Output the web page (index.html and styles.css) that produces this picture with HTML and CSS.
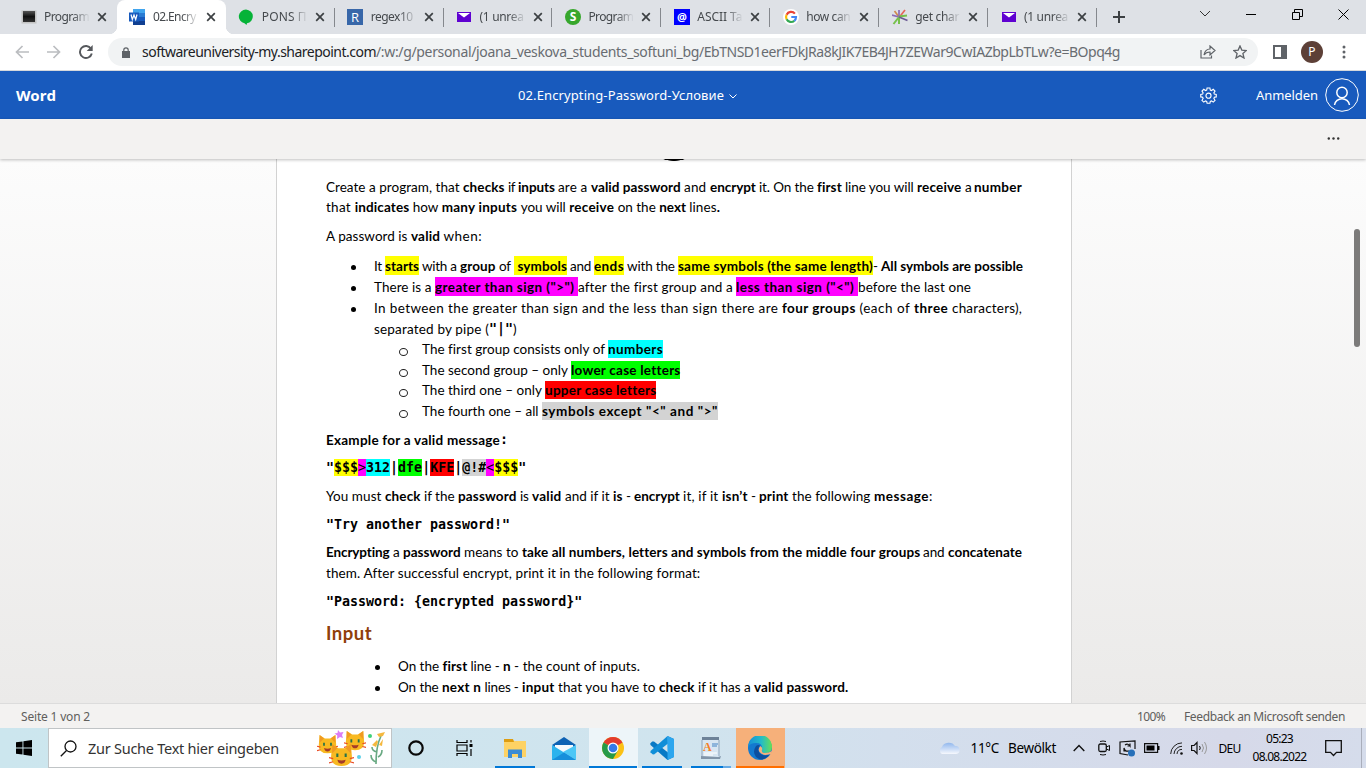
FILE: index.html
```html
<!DOCTYPE html>
<html lang="de">
<head>
<meta charset="utf-8">
<title>02.Encrypting-Password-Условие</title>
<link rel="stylesheet" href="styles.css">
</head>
<body>
<svg class="defs" width="0" height="0">
  <symbol id="x" viewBox="0 0 10 10"><path d="M1.2 1.2l7.6 7.6M8.8 1.2L1.2 8.8" stroke="#3c4043" stroke-width="1.7" fill="none"/></symbol>
  <symbol id="mail" viewBox="0 0 16 16"><path d="M1 3h14v10H1z" fill="#5f01d1"/><path d="M2 4h12L8 8.5z" fill="#fff"/></symbol>
  <symbol id="cat" viewBox="0 0 24 24"><path d="M3 1l6 4h6l6-4 1 12q0 9-10 9T2 13z" fill="#f8b921"/><path d="M3 1l5 4-5 5zM21 1l-5 4 5 5z" fill="#f09a22"/><path d="M8 10v3.500M16 10v3.500" stroke="#267349" stroke-width="2"/><path d="M8 16q4 1.500 8 0-1 4-4 4t-4-4z" fill="#a43b28"/><path d="M0 14l4 1M0 19l4-1M24 14l-4 1M24 19l-4-1" stroke="#e94c24" stroke-width="1.200"/></symbol>
</svg>

<header class="tabs">
  <div class="tab"><svg class="fav" viewBox="0 0 16 16"><defs><linearGradient id="k" x2="0" y2="1"><stop stop-color="#555"/><stop offset=".5" stop-color="#111"/><stop offset="1" stop-color="#333"/></linearGradient></defs><path d="M.5 1.5h15v13H.5z" fill="#c3c3c3"/><path d="M2 2h12v11H2z" fill="url(#k)"/></svg><span class="tt"><span data-w="45">Program</span></span><svg class="x"><use href="#x"/></svg></div>
  <div class="tab active"><svg class="fav" viewBox="0 0 16 16"><path d="M4 0h12v4H4z" fill="#41a5ee"/><path d="M4 4h12v4H4z" fill="#2b7cd3"/><path d="M4 8h12v4H4z" fill="#185abd"/><path d="M4 12h12v4H4z" fill="#103f91"/><path d="M0 3.5h10v9H0z" fill="#185abd"/><path d="M2 5.5l1.3 5L5 6l1.7 4.500 1.300-5" stroke="#fff" stroke-width="1.2" fill="none"/></svg><span class="tt"><span data-w="43">02.Encry</span></span><svg class="x"><use href="#x"/></svg></div>
  <div class="tab plain"><svg class="fav" viewBox="0 0 16 16"><path d="M8 .5a7.500 7 0 0 1 1 13.800L8.500 16l-2-1.700A7.500 7 0 0 1 8 .5z" fill="#06b338"/></svg><span class="tt"><span data-w="45">PONS П</span></span><svg class="x"><use href="#x"/></svg></div>
  <div class="tab"><svg class="fav" viewBox="0 0 16 16"><path d="M0 0h16v16H0z" fill="#3867a9"/><text x="8" y="12.500" text-anchor="middle" class="fr">R</text></svg><span class="tt"><span data-w="42">regex10</span></span><svg class="x"><use href="#x"/></svg></div>
  <div class="tab"><svg class="fav"><use href="#mail"/></svg><span class="tt"><span data-w="44">(1 unrea</span></span><svg class="x"><use href="#x"/></svg></div>
  <div class="tab"><svg class="fav" viewBox="0 0 16 16"><circle cx="8" cy="8" r="8" fill="#37a72c"/><text x="8" y="12.300" text-anchor="middle" class="fs">S</text></svg><span class="tt"><span data-w="45">Program</span></span><svg class="x"><use href="#x"/></svg></div>
  <div class="tab"><svg class="fav" viewBox="0 0 16 16"><path d="M0 0h16v16H0z" fill="#00f"/><text x="8" y="11.500" text-anchor="middle" class="fa">@</text></svg><span class="tt"><span data-w="45">ASCII Ta</span></span><svg class="x"><use href="#x"/></svg></div>
  <div class="tab"><svg class="fav" viewBox="0 0 16 16"><circle cx="8" cy="8" r="8" fill="#fff"/><g fill="none" stroke-width="2.200"><path d="M11.900 4.600A5 5 0 0 0 3.600 5.700" stroke="#ea4335"/><path d="M3.600 5.700a5 5 0 0 0 0 4.600" stroke="#fbbc05"/><path d="M3.600 10.300a5 5 0 0 0 7.700 1.500" stroke="#34a853"/><path d="M11.300 11.800A5 5 0 0 0 13 8H8.300" stroke="#4285f4"/></g></svg><span class="tt"><span data-w="44">how can</span></span><svg class="x"><use href="#x"/></svg></div>
  <div class="tab"><svg class="fav" viewBox="0 0 16 16" fill="none" stroke-width="1.700"><path d="M7 8L2.500 2" stroke="#d08a4d"/><path d="M7 7.500V1" stroke="#8b6bb5"/><path d="M7.500 8L13 1" stroke="#e5655a"/><path d="M7 8L0 6" stroke="#8b6bb5"/><path d="M7 8l-5.500 7M7 7.500L15 6.500M7 8v7" stroke="#76c14b" stroke-width="2"/><path d="M7 8l8.500 3.500" stroke="#6b5a94"/></svg><span class="tt"><span data-w="44">get char</span></span><svg class="x"><use href="#x"/></svg></div>
  <div class="tab"><svg class="fav"><use href="#mail"/></svg><span class="tt"><span data-w="44">(1 unrea</span></span><svg class="x"><use href="#x"/></svg></div>
  <svg class="plus" viewBox="0 0 12 12"><path d="M6 0v12M0 6h12" stroke="#3c4043" stroke-width="2"/></svg>
  <div class="winbtns">
    <svg width="12" height="8" viewBox="0 0 12 8"><path d="M1 1l5 5 5-5" fill="none" stroke="#333"/></svg>
    <svg width="10" height="10" viewBox="0 0 10 10"><path d="M0 5.500h10" stroke="#000"/></svg>
    <svg width="11" height="11" viewBox="0 0 11 11" fill="none" stroke="#000"><path d="M.5 3.500h7v7h-7zM2.500 3.500v-3h8v7h-3"/></svg>
    <svg width="11" height="11" viewBox="0 0 11 11"><path d="M.5.5l10 10M10.500.5l-10 10" stroke="#000"/></svg>
  </div>
</header>

<nav class="toolbar">
  <svg class="nav1" viewBox="0 0 14 14" fill="none" stroke="#bbbdc0" stroke-width="1.700"><path d="M14 7H1.500M7.500 1l-6 6 6 6"/></svg>
  <svg class="nav2" viewBox="0 0 14 14" fill="none" stroke="#bbbdc0" stroke-width="1.700"><path d="M0 7h12.500M6.500 1l6 6-6 6"/></svg>
  <svg class="nav3" viewBox="0 0 14 14"><path d="M12 3.700A6 6 0 1 0 12.800 8.500" fill="none" stroke="#55585c" stroke-width="1.900"/><path d="M13.700 0v6H7.700z" fill="#55585c"/></svg>
  <div class="pill">
    <svg class="lock" viewBox="0 0 8 11"><path d="M0 4h8v7H0z" fill="#5f6368"/><path d="M1.800 4.500V3a2.200 2.200 0 0 1 4.400 0v1.500" fill="none" stroke="#5f6368" stroke-width="1.200"/></svg>
    <span class="url"><span class="host" data-w="234">softwareuniversity-my.sharepoint.com</span><span data-w="323">/:w:/g/personal/joana_veskova_students_softuni_bg</span><span data-w="421">/EbTNSD1eerFDkJRa8kJIK7EB4JH7ZEWar9CwIAZbpLbTLw?e=BOpq4g</span></span>
    <svg class="share" viewBox="0 0 16 14" fill="none" stroke="#5f6368" stroke-width="1.200"><path d="M1 5v8h10.500v-2.500M4 10q1-6 6-6V1l5 4.500-5 4.500V7Q6 7 4 10z"/></svg>
    <svg class="star" viewBox="0 0 14 14"><path d="M7 .9l1.800 4.200 4.600.4-3.500 3 1.100 4.500L7 10.600 3 13l1.100-4.500-3.500-3 4.600-.4z" fill="none" stroke="#5f6368" stroke-width="1.300"/></svg>
  </div>
  <svg class="side" viewBox="0 0 14 14"><path d="M0 0h14v14H0z" fill="#5f6368"/><path d="M2 2h6v10H2z" fill="#fff"/></svg>
  <span class="avatar">P</span>
  <svg class="kebab" viewBox="0 0 4 14" fill="#5f6368"><circle cx="2" cy="2" r="1.500"/><circle cx="2" cy="7" r="1.500"/><circle cx="2" cy="12" r="1.500"/></svg>
</nav>

<div class="wordbar">
  <b class="brand"><span data-w="40">Word</span></b>
  <span class="docname"><span data-w="206">02.Encrypting-Password-Условие</span></span>
  <svg class="dchev" viewBox="0 0 8 5"><path d="M.5.5L4 4 7.500.5" fill="none" stroke="#fff"/></svg>
  <svg class="gear" viewBox="0 0 18 18" fill="none" stroke="#fff" stroke-width="1.200"><path d="M7.500 1h3l.4 2.200 1.300.5L14 2.400 15.900 4.300l-1.200 1.900.5 1.300 2 .4v2.600l-2 .4-.5 1.300 1.200 1.900-1.900 1.900-1.800-1.300-1.300.5-.4 2h-3l-.4-2-1.300-.5L4 16l-1.900-1.900 1.200-1.900-.5-1.300-2-.4V7.900l2-.4.5-1.300-1.200-1.900L4 2.400l1.800 1.300 1.300-.5z"/><circle cx="9" cy="9.200" r="2.700"/></svg>
  <span class="login"><span data-w="62">Anmelden</span></span>
  <svg class="person" viewBox="0 0 34 34" fill="none" stroke="#fff"><circle cx="17" cy="17" r="16.300"/><g stroke-width="1.500"><circle cx="17" cy="14.500" r="5.200"/><path d="M9.500 27a7.600 7.600 0 0 1 15 0"/></g></svg>
</div>
<div class="ribbon"><svg viewBox="0 0 12 3" fill="#333"><circle cx="1.300" cy="1.500" r="1.200"/><circle cx="6" cy="1.500" r="1.200"/><circle cx="10.700" cy="1.500" r="1.200"/></svg></div>

<main class="canvas">
  <article class="page">
    <div class="blob"></div>
    <p class="ln first"><span data-w="137">Create a program, that </span><b data-w="45">checks </b><span data-w="10">if </span><b data-w="40">inputs </b><span data-w="33">are a </span><b data-w="93">valid password </b><span data-w="26">and </span><b data-w="49">encrypt </b><span data-w="58">it. On the </span><b data-w="28">first </b><span data-w="72">line you will </span><b data-w="48">receive </b><span data-w="9">a </span><b data-w="48">number</b></p>
    <p class="ln"><span data-w="28.7">that </span><b data-w="58">indicates </b><span data-w="29">how </span><b data-w="79">many inputs </b><span data-w="48.500">you will </span><b data-w="48.500">receive </b><span data-w="41.500">on the </span><b data-w="30">next </b><span data-w="27.500">lines</span><b data-w="4">.</b></p>
    <p class="ln g9"><span data-w="85">A password is </span><b data-w="32.500">valid </b><span data-w="38.500">when:</span></p>
    <div class="l1">
      <p class="ln g10 dot"><span data-w="11">It </span><b class="hl yel" data-w="34">starts</b><span data-w="41"> with a </span><b data-w="39">group </b><span data-w="15">of </span><b class="hl yel" data-w="53"> symbols</b><span data-w="27"> and </span><b class="hl yel" data-w="30">ends</b><span data-w="54"> with the </span><b class="hl yel" data-w="195">same symbols (the same length)</b><span data-w="8">- </span><b data-w="142">All symbols are possible</b></p>
      <p class="ln g1 dot"><span data-w="61">There is a </span><b class="hl mag" data-w="143">greater than sign ("&gt;") </b><span data-w="158">after the first group and a </span><b class="hl mag" data-w="122">less than sign ("&lt;") </b><span data-w="113">before the last one</span></p>
      <p class="ln g1 dot"><span data-w="408">In between the greater than sign and the less than sign there are </span><b data-w="77.500">four groups </b><span data-w="54.500">(each of </span><b data-w="38">three </b><span data-w="70">characters),</span></p>
      <p class="ln g1"><span data-w="115">separated by pipe (</span><b class="mono" data-w="24">"|"</b><span data-w="5">)</span></p>
    </div>
    <div class="l2">
      <p class="ln ring"><span data-w="186">The first group consists only of </span><b class="hl cya" data-w="55">numbers</b></p>
      <p class="ln g1 ring"><span data-w="149">The second group – only </span><b class="hl gre" data-w="109">lower case letters</b></p>
      <p class="ln ring"><span data-w="123">The third one – only </span><b class="hl red" data-w="111">upper case letters</b></p>
      <p class="ln g1 ring"><span data-w="120">The fourth one – all </span><b class="hl gry" data-w="176">symbols except "&lt;" and "&gt;"</b></p>
    </div>
    <p class="ln g9"><b data-w="174">Example for a valid message</b><b class="mono" data-w="7">:</b></p>
    <p class="ln g7 mono row"><b>"</b><b class="hl yel">$$$</b><b class="hl mag thin">&gt;</b><b class="hl cya">312</b><b>|</b><b class="hl gre">dfe</b><b>|</b><b class="hl red">KFE</b><b>|</b><b class="hl gry">@!#</b><b class="hl mag thin">&lt;</b><b class="hl yel">$$$</b><b>"</b></p>
    <p class="ln g9"><span data-w="59">You must </span><b data-w="39">check </b><span data-w="34">if the </span><b data-w="62">password </b><span data-w="12">is </span><b data-w="33">valid </b><span data-w="48">and if it </span><b data-w="13">is </b><span data-w="8">- </span><b data-w="49">encrypt </b><span data-w="39">it, if it </span><b data-w="29">isn’t </b><span data-w="8">- </span><b data-w="33">print </b><span data-w="82">the following </span><b data-w="55">message</b><span data-w="3">:</span></p>
    <p class="ln g8 mono row"><b>"Try another password!"</b></p>
    <p class="ln g8"><b data-w="67">Encrypting </b><span data-w="10">a </span><b data-w="61">password </b><span data-w="58">means to </span><b data-w="401">take all numbers, letters and symbols from the middle four groups </b><span data-w="25">and </span><b data-w="74">concatenate</b></p>
    <p class="ln g1"><span data-w="374">them. After successful encrypt, print it in the following format:</span></p>
    <p class="ln g8 mono row"><b>"Password: {encrypted password}"</b></p>
    <h2><span data-w="46">Input</span></h2>
    <div class="l3">
      <p class="ln dot"><span data-w="44.500">On the </span><b data-w="28">first </b><span data-w="32.500">line - </span><b data-w="11">n </b><span data-w="126">- the count of inputs.</span></p>
      <p class="ln g1 dot"><span data-w="44">On the </span><b data-w="42.500">next n </b><span data-w="37.500">lines - </span><b data-w="36">input </b><span data-w="101">that you have to </span><b data-w="39">check </b><span data-w="56">if it has a </span><b data-w="91">valid password</b><b data-w="4">.</b></p>
    </div>
  </article>
  <div class="thumb"></div>
</main>

<footer class="status"><span data-w="69">Seite 1 von 2</span><span class="zoomv"><span data-w="28">100%</span></span><span data-w="161">Feedback an Microsoft senden</span></footer>

<div class="taskbar">
  <div class="start"><svg width="16" height="16" viewBox="0 0 16 16"><path d="M0 2.300L6.500 1.400V7.500H0zM7.400 1.200L16 0v7.500H7.400zM0 8.500h6.500v6.100L0 13.700zM7.400 8.500H16V16l-8.600-1.200z"/></svg></div>
  <div class="search">
    <svg width="17" height="17" viewBox="0 0 17 17" fill="none" stroke="#111" stroke-width="1.300"><circle cx="10.500" cy="6.500" r="5.500"/><path d="M6.500 10.500L.8 16.200"/></svg>
    <span data-w="191">Zur Suche Text hier eingeben</span>
    <svg class="cats" width="70" height="37" viewBox="0 0 70 37"><use href="#cat" width="21" height="21" y="4"/><use href="#cat" x="27" width="22" height="22"/><path d="M21 0l2 2.500 3.500-.5-1.500 3 1 3-3-1-3 2 .3-3.500-2.800-2 3-.5z" fill="#dc7df4"/><use href="#cat" x="12" y="13" width="25" height="25"/><circle cx="53" cy="6" r="2" fill="#3fd178"/><circle cx="42" cy="27" r="2" fill="#5cd0e8"/><path d="M59 34q0-18 5-28M60 22q-5-1-5-5M59 32q-5-2-5-7M61 27q4-2 4-7" fill="none" stroke="#68a982" stroke-width="1.600"/><path d="M68 2l-8 2 2 3 4-1zM60 10l-5 5 4 2 2-5zM66 9l-4 6 3 1z" fill="#f5b83e"/></svg>
  </div>
  <div class="app cort"><svg width="16" height="16" viewBox="0 0 16 16"><circle cx="8" cy="8" r="6.700" fill="none" stroke="#0a0a0a" stroke-width="2.200"/></svg></div>
  <div class="app tv"><svg width="17" height="16" viewBox="0 0 17 16" fill="none" stroke="#000" stroke-width="1.200"><path d="M1 0v2.500h10V0M1 16v-2.500h10V16M1 5h10v6H1zM15 0v2.500M15 9v7"/><path d="M13.500 4h3v3h-3z" fill="#000" stroke="none"/></svg></div>
  <div class="app u40"><svg width="22" height="19" viewBox="0 0 22 19"><path d="M0 1h9l1.500 1H22v16H0z" fill="#fdd264"/><path d="M0 0h9l1 3H0z" fill="#dd9d12"/><path d="M4 19v-8.500h14V19h-4v-4H8v4z" fill="#3c8cd4"/></svg></div>
  <div class="app"><svg width="24" height="23" viewBox="0 0 24 23"><path d="M0 8L12 0l12 8-12 8z" fill="#0d62b4"/><path d="M3 8h18v5l-9 4-9-4z" fill="#f5f9fc"/><path d="M0 8l24 15H0z" fill="#2cb3ed"/><path d="M24 8v15L11 15z" fill="#4cc7f6"/><path d="M0 23L12 15.500 24 23z" fill="#178fdb"/></svg></div>
  <div class="app chrome u48"><svg width="22" height="22" viewBox="0 0 22 22"><circle cx="11" cy="11" r="11" fill="#fbc116"/><path d="M11 11L1.500 5.500A11 11 0 0 1 20.500 5.500z" fill="#e33b2e"/><path d="M1.500 5.500A11 11 0 0 0 11 22l4.800-8.300L11 11z" fill="#269a48"/><circle cx="11" cy="11" r="5.500" fill="#fff"/><circle cx="11" cy="11" r="4.300" fill="#3579e8"/></svg></div>
  <div class="app u40"><svg width="24" height="24" viewBox="0 0 24 24"><path d="M17.500 0L24 3v18l-6.500 3L.5 9 .2 7.500l2-2L4 5.500 18 16.500z" fill="#0879c5"/><path d="M18 7.500L4 18.500l-1.500-.2-2-2L.5 15 17.500 0z" fill="#0f8ed8"/><path d="M17.500 0L24 3v18l-6.500 3z" fill="#2ca6ee"/></svg></div>
  <div class="app u40 two"><svg width="20" height="22" viewBox="0 0 20 22"><path d="M1 1h17l1 20H0z" fill="#d8e6f2"/><path d="M1 0h17v3H1z" fill="#6d8298"/><path d="M1 3v16M18 3v16" stroke="#8ba3bb"/><path d="M0 19l17 1 3-1-1 3H0z" fill="#8295a9"/><text x="2" y="14" class="pad">A</text><path d="M11 7h6M11 9h5" stroke="#4583c5"/><path d="M3 16h13M3 18h9" stroke="#fff"/></svg></div>
  <div class="app edge u48"><svg width="24" height="24" viewBox="0 0 24 24"><defs><linearGradient id="e"><stop stop-color="#168ed8"/><stop offset=".55" stop-color="#24bbc8"/><stop offset="1" stop-color="#67df55"/></linearGradient></defs><circle cx="12" cy="12" r="12" fill="#1479cf"/><path d="M0 11A12 12 0 0 1 24 11q0 6-7 6-4 0-3-3 1-7-6-7-6 0-8 4z" fill="url(#e)"/><path d="M8 10q-4 6 0 11 4 4 9 1.500 3-1.500 4.500-4-4 1.500-7 .5-4-1.500-4-5.500 0-3 1.500-4-2-1-4 .5z" fill="#0d4f9e"/><path d="M12.500 10q-3 3-1 6 3 4 9 2.500l2.500-.5 1-3q-3 2-7 2-4 0-3-3 1-2-1.500-4z" fill="#f6b07a"/></svg></div>
  <div class="tray">
    <svg class="cloud" width="22" height="14" viewBox="0 0 22 14"><defs><linearGradient id="c" x2="0" y2="1"><stop stop-color="#91b7ed"/><stop offset="1" stop-color="#f6f8fd"/></linearGradient></defs><path d="M4 13a4 4 0 0 1 0-7 7 6 0 0 1 13-1 4 4 0 0 1 1 8z" fill="url(#c)"/></svg>
    <span class="weather"><span data-w="28.500">11°C</span><span data-w="48">Bewölkt</span></span>
    <svg class="t1" width="12" height="8" viewBox="0 0 12 8"><path d="M.7 7L6 1.500 11.300 7" fill="none" stroke="#111" stroke-width="1.400"/></svg>
    <svg class="t2" width="12" height="16" viewBox="0 0 12 16" fill="none" stroke="#111"><rect x=".8" y="4" width="7.500" height="7.500" rx="1.500" stroke-width="1.300"/><path d="M8.500 7l3-1.500v5l-3-1.500M2 1.500q3-1 6 0M2 14.500q3 1 6 0"/></svg>
    <svg class="t3" width="17" height="17" viewBox="0 0 17 17" fill="none" stroke="#111" stroke-width="1.200"><path d="M9 15L1 13.500V2L16 1v8M6 5q3-2 5 1V3.500M11 6H8.500M5 8v3h5Q6 12 5 8z"/><circle cx="12.500" cy="13" r="3.500" fill="#2770b9" stroke="none"/></svg>
    <svg class="t4" width="16" height="10" viewBox="0 0 16 10"><path d="M.6.600h13v8.800h-13z" fill="none" stroke="#111" stroke-width="1.200"/><path d="M2.500 2.500h8v5h-8zM14 3h1.500v4H14z"/></svg>
    <svg class="t5" width="13" height="13" viewBox="0 0 13 13" fill="none" stroke="#222"><path d="M.7 12A11.300 11.300 0 0 1 12 .9M4 12a8 8 0 0 1 8-7.700M7 12a5 5 0 0 1 5-4.600"/><circle cx="11.500" cy="11.500" r="1.300" fill="#111" stroke="none"/></svg>
    <svg class="t6" width="17" height="14" viewBox="0 0 17 14" fill="none" stroke="#111"><path d="M.6 4.500h2.500L6 1.500v11l-2.900-3H.6z" stroke-width="1.200"/><path d="M8.500 5q1.500 2 0 4"/><path d="M11 3q3 4 0 8M13.500 1q4 6 0 12" stroke="#999"/></svg>
    <span class="lang"><span data-w="22">DEU</span></span>
    <span class="clock"><span><span data-w="27">05:23</span></span><span><span data-w="54">08.08.2022</span></span></span>
    <svg class="t7" width="17" height="17" viewBox="0 0 17 17"><path d="M.7.700h15.600v11.600h-4.800L8.500 15.500l-3-3.200H.7z" fill="none" stroke="#111" stroke-width="1.300"/></svg>
    <i class="desk"></i>
  </div>
</div>
<script src="fit.js"></script>
</body>
</html>
```
FILE: styles.css
```css
* { box-sizing: border-box; }
body { margin: 0; width: 1366px; height: 768px; overflow: hidden; display: flex; flex-direction: column; font-family: "Noto Sans", "Open Sans", sans-serif; font-size: 12px; color: #000; }
svg { display: block; flex: none; }
.defs { position: absolute; }
span[data-w], b[data-w] { display: inline-block; white-space: pre; }

.tabs { height: 34px; flex: none; background: #dee1e6; display: flex; align-items: center; padding-left: 8px; }
.tab { width: 108.9px; height: 34px; flex: none; display: flex; align-items: center; padding-left: 12.5px; position: relative; color: #45494d; }
.tab::after { content: ""; position: absolute; right: 0; top: 8px; width: 1px; height: 19px; background: #85888d; }
.tab:first-child::after, .tab.active::after { display: none; }
.tab.active { background: #fff; border-radius: 8px 8px 0 0; }
.tab.active::before { content: ""; position: absolute; left: -8px; right: -8px; bottom: 0; height: 8px; background: radial-gradient(circle at 0 0, transparent 8px, #fff 8.500px) left / 8px 8px no-repeat, radial-gradient(circle at 100% 0, transparent 8px, #fff 8.500px) right / 8px 8px no-repeat; }
.fav { width: 16px; height: 16px; }
.fr { font: 13px "Open Sans", sans-serif; fill: #fff; }
.fs { font: bold 12px "Open Sans", sans-serif; fill: #fff; }
.fa { font: bold 11px "Open Sans", sans-serif; fill: #fff; }
.tt { width: 46px; margin-left: 7.500px; white-space: nowrap; line-height: 18px; -webkit-mask-image: linear-gradient(90deg, #000 62%, transparent); mask-image: linear-gradient(90deg, #000 62%, transparent); }
.x { width: 10px; height: 10px; margin-left: 7px; }
.plus { width: 12px; height: 12px; margin-left: 16px; }
.winbtns { display: flex; align-items: center; margin: -6px 17px 0 auto; gap: 35.5px; }

.toolbar { height: 37px; flex: none; background: #fff; border-bottom: 1px solid #d5d8dc; display: flex; align-items: center; padding-left: 15px; }
.nav1, .nav2, .nav3 { width: 14px; height: 14px; }
.nav2, .nav3 { margin-left: 18px; }
.pill { width: 1150px; height: 28px; margin-left: 15px; border-radius: 14px; background: #f1f3f4; display: flex; align-items: center; }
.lock { width: 8px; height: 11px; margin-left: 14px; }
.url { width: 1070px; margin-left: 12px; font-size: 14px; line-height: 24px; color: #686c71; white-space: nowrap; }
.host { color: #202124; }
.share { width: 16px; height: 14px; margin-left: -12px; }
.star { width: 14px; height: 14px; margin-left: 17px; }
.side { width: 14px; height: 14px; margin-left: 15px; }
.avatar { width: 22px; height: 22px; margin-left: 14px; border-radius: 50%; background: #5d4037; color: #fff; text-align: center; font-size: 12px; line-height: 22px; }
.kebab { width: 4px; height: 14px; margin-left: 19px; }

.wordbar { height: 48px; flex: none; background: #185abd; color: #fff; display: flex; align-items: center; }
.brand { margin-left: 16px; width: 502px; font-size: 15px; }
.docname, .login { font-size: 13px; }
.dchev { width: 8px; height: 5px; margin: 2px 0 0 5px; }
.gear { width: 17px; height: 17px; margin-left: 463px; }
.login { margin-left: 39px; }
.person { width: 34px; height: 34px; margin-left: 7px; }
.ribbon { height: 40px; flex: none; background: #f3f2f1; padding: 18px 0 0 1327px; box-shadow: 0 1px 3px rgba(0,0,0,.25); position: relative; z-index: 1; }
.ribbon svg { width: 13px; height: 3px; }

.canvas { height: 544px; flex: none; overflow: hidden; position: relative; background: linear-gradient(#fcfcfc, #ebeae9); padding-left: 276px; }
.page { width: 796px; height: 560px; background: #fff; border: solid #d2d2d2; border-width: 0 1px; padding-left: 49px; font-family: Lato, sans-serif; font-size: 13.500px; }
.blob { width: 28px; height: 18px; margin-left: 334px; background: radial-gradient(ellipse 15px 5px at 50% -3px, #000 90%, transparent); }
.ln { margin: 0; height: 20px; line-height: 20px; display: flex; white-space: pre; position: relative; }
.g1 { margin-top: 1px; }
.g7 { margin-top: 7px; }
.g8 { margin-top: 8px; }
.g9 { margin-top: 9px; }
.g10 { margin-top: 10px; }
.l1 { padding-left: 48px; }
.l2 { padding-left: 96px; }
.l3 { padding-left: 72px; }
.dot::before { content: ""; position: absolute; left: -23.5px; top: 8.5px; width: 5px; height: 5px; border-radius: 50%; background: #000; }
.ring::before { content: ""; position: absolute; left: -23px; top: 9px; width: 7px; height: 6px; border-radius: 50%; border: 1px solid #222; }
.l2 .ring::before { margin-left: 0; left: -23px; }
.hl { height: 19px; line-height: 20px; }
.l2 .hl { margin-top: 1px; height: 18px; line-height: 18px; }
.mono { font-family: "DejaVu Sans Mono", monospace; font-size: 13.310px; }
.row { line-height: 22px; }
.mono .hl { margin-top: 2px; height: 17px; line-height: 18px; }
.thin { font-weight: normal; }
.yel { background: #ff0; }
.mag { background: #f0f; }
.cya { background: #0ff; }
.gre { background: #0f0; }
.red { background: #f00; }
.gry { background: #d3d3d3; }
h2 { margin: 10px 0; height: 25px; line-height: 25px; font-size: 18.500px; color: #8f400b; }
.l3 { margin-top: 10px; }
.thumb { position: absolute; left: 1354px; top: 70px; width: 6px; height: 118px; border-radius: 3px; background: #7c7b7a; }

.status { height: 25px; flex: none; background: #f3f2f1; border-top: 1px solid #dcdcdc; color: #605e5c; display: flex; align-items: center; padding: 1px 0 0 21px; }
.zoomv { margin: 0 19px 0 1047px; }

.taskbar { height: 40px; flex: none; display: flex; background: linear-gradient(90deg, #cce6ee, #d0e4ee 50%, #d3dfed 65%, #d6d9e9 90%, #d5dceb); }
.start { width: 48px; display: flex; align-items: center; justify-content: center; }
.search { width: 344px; height: 40px; border: 1px solid #c0c4c6; background: #fff; display: flex; align-items: center; padding-left: 11px; font-size: 14.500px; color: #333; }
.search span { margin-left: 11px; }
.cats { margin: 1px 0 0 38px; }
.app { width: 49px; display: flex; align-items: center; justify-content: center; position: relative; }
.cort { width: 48px; }
.tv { margin-right: 1.500px; }
.u40::after, .u48::after { content: ""; position: absolute; bottom: 0; left: 4.500px; width: 40px; height: 2px; background: #0078d7; }
.u48::after { left: .5px; width: 48px; }
.two::after { background: linear-gradient(90deg, #0078d7 80%, #67abe5 80%); }
.chrome { background: #edf5f9; }
.edge { background: #f6b07a; }
.edge::after { background: #ff6f00; }
.pad { font: bold 12px "Liberation Serif", serif; fill: #f58025; }
.tray { margin-left: 153px; display: flex; align-items: center; }
.weather { margin-left: 11px; width: 87px; font-size: 13.5px; display: flex; gap: 9px; }
.t1 { margin-left: 15px; }
.t2 { margin-left: 13px; }
.t3 { margin-left: 9px; }
.t4 { margin-left: 8px; }
.t5 { margin-left: 10px; }
.t6 { margin-left: 8px; }
.lang { margin-left: 11px; }
.clock { margin-left: 12px; width: 54px; display: flex; flex-direction: column; text-align: center; line-height: 18px; }
.t7 { margin-left: 18px; }
.desk { width: 1px; height: 40px; margin-left: 19px; background: #a9aebb; }
```
FILE: fit.js
```js
for (const run of document.querySelectorAll("[data-w]")) {
  const target = parseFloat(run.dataset.w);
  const natural = run.getBoundingClientRect().width;
  run.style.letterSpacing = (target - natural) / run.textContent.length + "px";
  run.style.width = target + "px";
}
```
